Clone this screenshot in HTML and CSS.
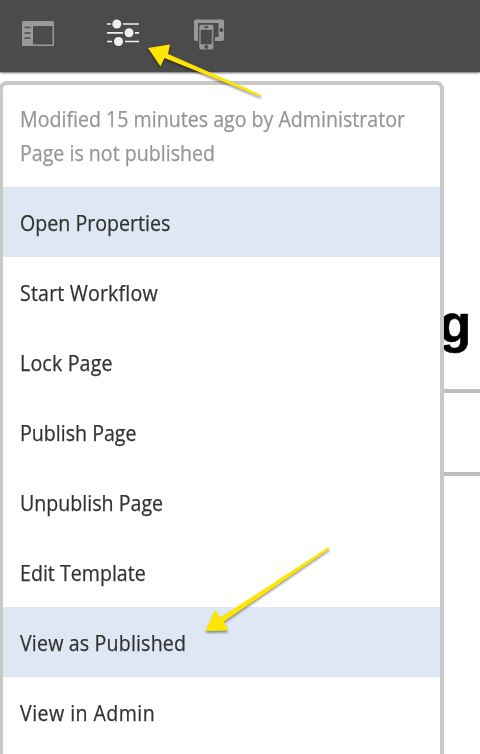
FILE: index.html
```html
<!DOCTYPE html>
<html lang="en">
<head>
<meta charset="utf-8">
<title>Page Information</title>
<link rel="stylesheet" href="styles.css">
</head>
<body>
<header class="toolbar">
  <svg class="icon icon-panel" width="32" height="26" viewBox="0 0 32 26">
    <path fill="#999" fill-rule="evenodd" d="M1 0H31Q32 0 32 1V24Q32 25 31 25H1Q0 25 0 24V1Q0 0 1 0ZM11 5V23.500H30.500V5Z"/>
    <path d="M2.500 6.500H8.500M2.500 12H8.500M2.500 17H8.500" stroke="#4b4b4b" stroke-width="1.700"/>
  </svg>
  <svg class="icon icon-sliders" width="32" height="28" viewBox="0 0 32 28">
    <g stroke="#f0f0f0" stroke-width="1.700"><path d="M0 5H4M16 5H32M0 13.800H16M28 13.800H32M0 22.500H5M18 22.500H32"/></g>
    <g fill="#f0f0f0"><circle cx="9.800" cy="5" r="4.500"/><circle cx="22" cy="13.800" r="4.500"/><circle cx="11.500" cy="22.500" r="4.500"/></g>
  </svg>
  <svg class="icon icon-devices" width="30" height="32" viewBox="0 0 30 32">
    <path fill="#999" fill-rule="evenodd" d="M2 .5H28Q30 .5 30 2.500V20Q30 22 28 22H21V18H24.500V4H4V22H2Q0 22 0 20V2.500Q0 .5 2 .5ZM27.300 9A2 2 0 1 0 27.300 13A2 2 0 1 0 27.300 9Z"/>
    <path fill="#999" stroke="#4b4b4b" stroke-width=".6" fill-rule="evenodd" d="M7 5.500H17.500Q19.700 5.500 19.700 7.500V28.500Q19.700 30.700 17.500 30.700H7Q5 30.700 5 28.500V7.500Q5 5.500 7 5.500ZM7 11V25H17.700V11ZM10.500 7.500V8.500H14V7.500ZM12.300 26.200A1.700 1.700 0 1 0 12.300 29.600A1.700 1.700 0 1 0 12.300 26.200Z"/>
  </svg>
</header>
<main class="page">
  <section class="menu">
    <div class="status">
      <p><span class="label">Modified 15 minutes ago by Administrator</span></p>
      <p><span class="label">Page is not published</span></p>
    </div>
    <ul class="items">
      <li class="item active"><span class="label">Open Properties</span></li>
      <li class="item"><span class="label loose">Start Workflow</span></li>
      <li class="item"><span class="label loose">Lock Page</span></li>
      <li class="item"><span class="label">Publish Page</span></li>
      <li class="item"><span class="label">Unpublish Page</span></li>
      <li class="item"><span class="label">Edit Template</span></li>
      <li class="item active"><span class="label loose">View as Published</span></li>
      <li class="item"><span class="label looser">View in Admin</span></li>
    </ul>
  </section>
  <section class="content">
    <div class="heading"><span>g</span></div>
    <div class="placeholder"></div>
  </section>
</main>
<svg class="arrows" width="480" height="754" viewBox="0 0 480 754">
  <g fill="#ffe600">
    <path d="M148 48L170 44.500L168 54L261 94.800V96.800L164.500 58L160.500 66.500Z"/>
    <path d="M205.500 631L215 610L220.500 617.500L328.500 547L329.500 549L224 621.500L228 630.500Z"/>
  </g>
</svg>
</body>
</html>
```
FILE: styles.css
```css
* { box-sizing: border-box; }
html, body { margin: 0; height: 754px; overflow: hidden; background: #fff; }
body { font-family: "Open Sans", "Noto Sans", sans-serif; display: flex; flex-direction: column; position: relative; }
.toolbar { height: 72px; flex: none; display: flex; background: #4b4b4b; padding: 19px 22px; box-shadow: 0 1px 2px rgba(0,0,0,.6); }
.icon { flex: none; }
.icon-panel { margin-top: 2px; }
.icon-sliders { margin-left: 53px; }
.icon-devices { margin-left: 55px; }
.page { display: flex; flex: 1; min-height: 0; padding-top: 9px; margin-left: -1px; }
.menu { width: 445px; height: 673px; flex: none; border: 4px solid #c8c8c8; border-bottom: 0; border-radius: 8px 8px 0 0; color: #323232; font-size: 21.5px; }
.status { height: 102px; padding: 17px; color: #969696; }
.status p { margin: 0; height: 34px; line-height: 34px; }
.label { display: inline-block; white-space: nowrap; transform: scaleX(.912); transform-origin: left; -webkit-text-stroke: .25px currentColor; }
.loose { letter-spacing: .18px; }
.looser { letter-spacing: .48px; }
.items { list-style: none; margin: 0; padding: 0; height: 567px; overflow: hidden; }
.item { height: 70px; line-height: 72px; padding-left: 17px; }
.active { background: #dee8f4; }
.content { flex: 1; min-width: 0; padding-top: 208px; }
.heading { height: 100px; overflow: hidden; font: bold 53px/70px "Liberation Sans", sans-serif; color: #000; }
.heading span { margin-left: -5px; -webkit-text-stroke: .6px #000; }
.placeholder { height: 87px; border-top: 4px solid #bebebe; border-bottom: 4px solid #bebebe; margin-right: -1px; }
.arrows { position: absolute; left: 0; top: 0; pointer-events: none; filter: drop-shadow(0 2px 1px rgba(0,0,0,.4)); }
```
